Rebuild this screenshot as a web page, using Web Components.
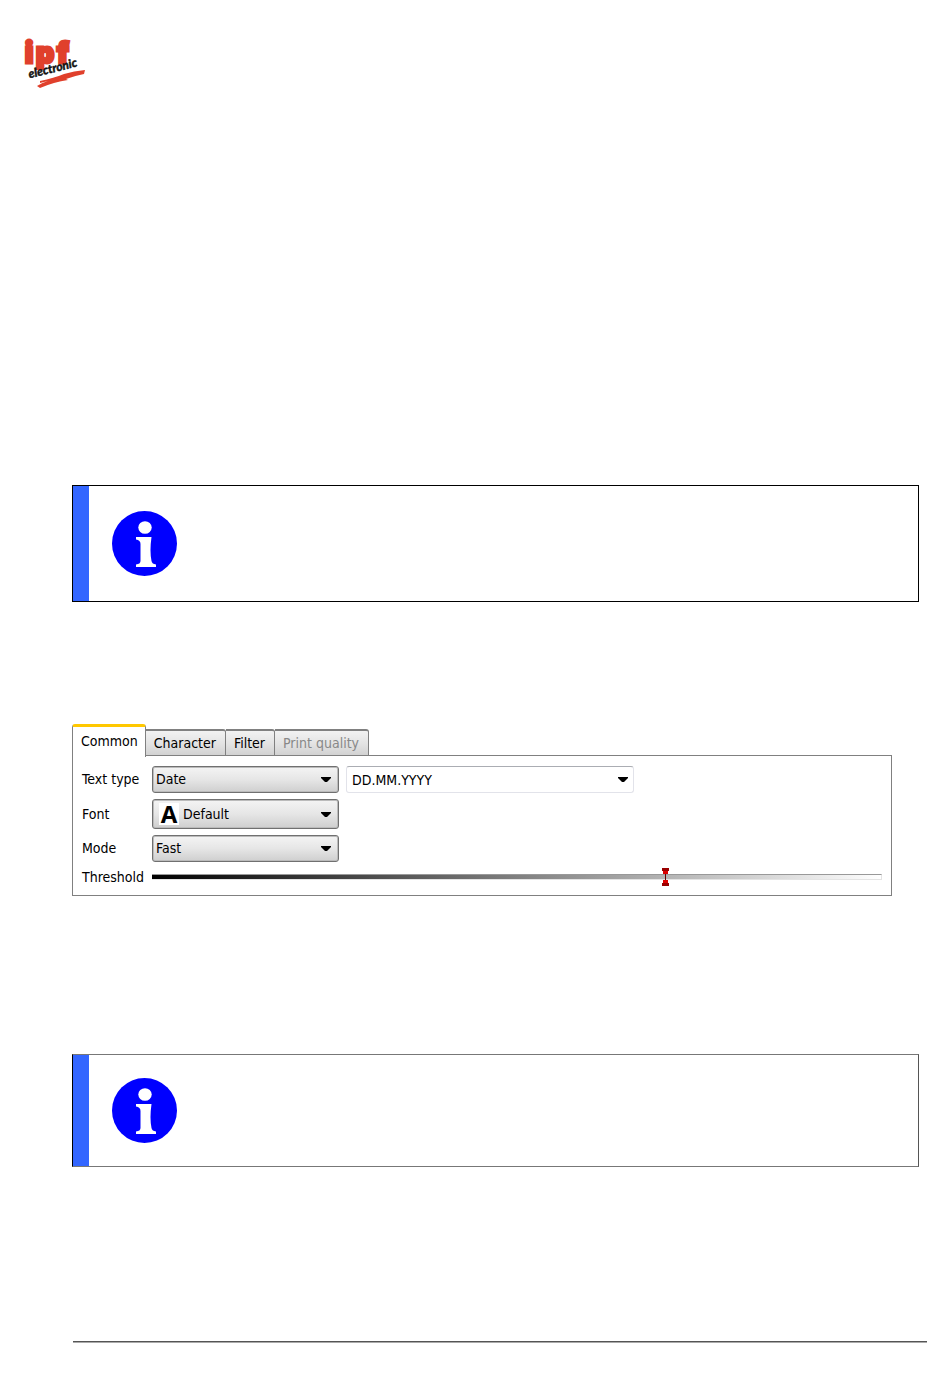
<!DOCTYPE html>
<html lang="en">
<head>
<meta charset="utf-8">
<meta name="viewport" content="width=device-width, initial-scale=1">
<title>ipf electronic</title>
<style>
  :root {
    --ui-font: "DejaVu Sans Condensed", "DejaVu Sans", sans-serif;
    --frame-gray: #808080;
    --note-blue: #3366ff;
    --tab-accent: #ffc800;
  }

  body {
    margin: 0;
    background: #fff;
    color: #000;
    font-family: var(--ui-font);
    font-size: 14px;
  }
</style>
</head>
<body>
<doc-page>
  <ipf-logo slot="header"></ipf-logo>
  <info-note></info-note>
  <tab-panel>
    <settings-form></settings-form>
  </tab-panel>
  <info-note soft></info-note>
</doc-page>

<script>
class DocPage extends HTMLElement {
  constructor() {
    super();
    const shadow = this.attachShadow({mode: 'open'});
    shadow.innerHTML = `
      <style>
        :host {
          display: block;
          padding-bottom: 44px;
        }

        header {
          padding: 38px 24px 0;
        }

        main {
          display: flex;
          flex-direction: column;
          padding: 395px 31px 174px 72px;
        }

        ::slotted(tab-panel) {
          margin: 122px 27px 158px 0;
        }

        hr {
          margin: 0 23px 0 73px;
          border: 0;
          border-top: 1px solid #555;
          border-bottom: 1px solid #aaa;
        }
      </style>
      <header><slot name="header"></slot></header>
      <main><slot></slot></main>
      <footer><hr></footer>
    `;
  }
}

class IpfLogo extends HTMLElement {
  constructor() {
    super();
    const shadow = this.attachShadow({mode: 'open'});
    shadow.innerHTML = `
      <style>
        :host {
          display: block;
          height: 52px;
        }

        svg {
          display: block;
          overflow: visible;
        }

        .name {
          font: 900 28px Inter, sans-serif;
          fill: #e0402c;
          stroke: #e0402c;
          stroke-width: 3;
        }

        .script {
          font: italic 700 12px Lato, sans-serif;
          fill: #111;
          stroke: #111;
          stroke-width: 0.5;
        }
      </style>
      <svg width="62" height="52" viewBox="0 0 62 52" role="img" aria-label="ipf electronic">
        <text class="name" y="25"><tspan x="1">i</tspan><tspan x="12">p</tspan><tspan x="33">f</tspan></text>
        <g transform="rotate(-14 7 42)">
          <text class="script" x="6" y="40">electronic</text>
        </g>
        <path d="M16 43 Q30 40 40 36 Q50 33 61 32 L60 36 Q50 38 42 41 L44 42 Q30 44 16 50 L13 48 Q17 45 24 43 L16 45 Z" fill="#e0402c"/>
      </svg>
    `;
  }
}

class InfoNote extends HTMLElement {
  constructor() {
    super();
    const shadow = this.attachShadow({mode: 'open'});
    shadow.innerHTML = `
      <style>
        :host {
          display: flex;
          border: 1px solid #000;
        }

        :host([soft]) {
          border-color: #777 #555 #777 #000;
        }

        .bar {
          width: 16px;
          background: var(--note-blue);
        }

        .icon {
          padding: 25px 23px;
        }

        :host([soft]) .icon {
          padding: 23px;
        }

        svg {
          display: block;
        }
      </style>
      <div class="bar"></div>
      <div class="icon">
        <svg width="65" height="65" viewBox="0 0 65 65" role="img" aria-label="Information">
          <circle cx="32.5" cy="32.5" r="32.5" fill="#00f"/>
          <ellipse cx="33" cy="16.5" rx="6.7" ry="6.3" fill="#fff"/>
          <path d="M24 26 H39.5 Q37.5 40 39.5 50 Q40 53 44 53.5 V56 H24 V53.5 Q28.5 53 28.5 50 V33 Q28.5 29 24 28.5 Z" fill="#fff"/>
        </svg>
      </div>
      <slot></slot>
    `;
  }
}

class TabPanel extends HTMLElement {
  constructor() {
    super();
    const shadow = this.attachShadow({mode: 'open'});
    shadow.innerHTML = `
      <style>
        :host {
          display: block;
        }

        .tabs {
          display: flex;
          align-items: flex-end;
        }

        button {
          box-sizing: border-box;
          height: 27px;
          margin: 0;
          padding: 0 9px 0 8px;
          border: 1px solid var(--frame-gray);
          border-left: 0;
          border-top-width: 2px;
          border-radius: 0 3px 0 0;
          background: linear-gradient(#f2f2f2, #e4e4e4 50%, #d2d2d2);
          color: #000;
          font: inherit;
          white-space: nowrap;
        }

        button.active {
          position: relative;
          height: 33px;
          margin-bottom: -1px;
          padding: 0 7px 2px 8px;
          border-left: 1px solid var(--frame-gray);
          border-top: 3px solid var(--tab-accent);
          border-bottom: 0;
          border-radius: 3px 3px 0 0;
          background: #fff;
        }

        button:disabled {
          color: #888;
        }

        .body {
          margin-top: -1px;
          padding: 10px 9px 9px;
          border: 1px solid var(--frame-gray);
        }
      </style>
      <div class="tabs" role="tablist">
        <button class="active" role="tab" aria-selected="true">Common</button>
        <button role="tab">Character</button>
        <button role="tab">Filter</button>
        <button role="tab" disabled>Print quality</button>
      </div>
      <div class="body" role="tabpanel"><slot></slot></div>
    `;
  }

  connectedCallback() {
    const tabs = this.shadowRoot.querySelectorAll('button');
    tabs.forEach(tab => {
      tab.addEventListener('click', () => {
        tabs.forEach(other => {
          other.classList.toggle('active', other === tab);
          other.setAttribute('aria-selected', other === tab);
        });
      });
    });
  }
}

// Frame and arrow shared by every drop-down; the control itself is slotted in
class DropBox extends HTMLElement {
  constructor() {
    super();
    const shadow = this.attachShadow({mode: 'open'});
    shadow.innerHTML = `
      <style>
        :host {
          box-sizing: border-box;
          display: grid;
          grid-template-columns: auto 1fr 24px;
          align-items: center;
          height: 27px;
          border: 1px solid #707070;
          border-radius: 3px;
          background: linear-gradient(#f4f4f4, #e6e6e6 50%, #cfcfcf);
          box-shadow: inset 0 0 0 1px #bbb;
        }

        :host([tall]) {
          height: 30px;
        }

        :host([editable]) {
          grid-template-columns: auto 1fr 20px;
          border-color: #abadb3 #e2e3ea #e2e3ea;
          background: #fff;
          box-shadow: none;
        }

        ::slotted(select),
        ::slotted(input) {
          grid-area: 1 / 2 / 2 / 4;
          align-self: stretch;
        }

        svg {
          grid-area: 1 / 3;
          justify-self: center;
          pointer-events: none;
          z-index: 1;
        }
      </style>
      <slot name="icon"></slot>
      <slot></slot>
      <svg width="10" height="5" viewBox="0 0 10 5" aria-hidden="true">
        <path d="M0 0 H10 V1 L6 5 H4 L0 1 Z"/>
      </svg>
    `;
  }
}

class SettingsForm extends HTMLElement {
  constructor() {
    super();
    const shadow = this.attachShadow({mode: 'open'});
    shadow.innerHTML = `
      <style>
        :host {
          display: block;
        }

        form {
          display: grid;
          grid-template-columns: 70px 187px 295px 1fr;
          align-items: center;
          row-gap: 6px;
        }

        label {
          grid-column: 1;
          padding-bottom: 1px;
          white-space: nowrap;
        }

        select,
        input {
          box-sizing: border-box;
          min-width: 0;
          margin: 0;
          border: 0;
          appearance: none;
          background: none;
          color: inherit;
          font: inherit;
        }

        select {
          padding: 0 24px 1px 3px;
        }

        input[type="text"] {
          padding: 0 24px 0 5px;
        }

        .pattern {
          grid-column: 3;
          margin-left: 7px;
        }

        .letter {
          width: 20px;
          margin: 0 1px 0 6px;
          background: #fff;
          font: 700 24px/22px "Open Sans", sans-serif;
          text-align: center;
        }

        input[type="range"] {
          grid-column: 2 / -1;
          height: 18px;
        }

        input[type="range"]::-webkit-slider-runnable-track {
          height: 6px;
          box-sizing: border-box;
          border-top: 1px solid #999;
          border-bottom: 1px solid #e4e4e4;
          border-right: 1px solid #e4e4e4;
          background: linear-gradient(90deg, #000, #fff);
        }

        input[type="range"]::-webkit-slider-thumb {
          appearance: none;
          width: 7px;
          height: 18px;
          margin-top: -7px;
          background:
            linear-gradient(#900, #900) 0 0 / 7px 3px no-repeat,
            linear-gradient(#900, #900) 0 100% / 7px 3px no-repeat,
            linear-gradient(#d00, #d00) 50% 3px / 5px 3px no-repeat,
            linear-gradient(#d00, #d00) 50% 12px / 5px 3px no-repeat,
            linear-gradient(#600, #600) 50% 0 / 1px 100% no-repeat;
        }
      </style>
      <form>
        <label for="type">Text type</label>
        <drop-box>
          <select id="type"><option>Date</option></select>
        </drop-box>
        <drop-box class="pattern" editable>
          <input type="text" value="DD.MM.YYYY" aria-label="Date format">
        </drop-box>

        <label for="font">Font</label>
        <drop-box tall>
          <span class="letter" slot="icon" aria-hidden="true">A</span>
          <select id="font"><option>Default</option></select>
        </drop-box>

        <label for="mode">Mode</label>
        <drop-box>
          <select id="mode"><option>Fast</option></select>
        </drop-box>

        <label for="threshold">Threshold</label>
        <input id="threshold" type="range" min="0" max="255" value="180">
      </form>
    `;
  }
}

customElements.define('doc-page', DocPage);
customElements.define('ipf-logo', IpfLogo);
customElements.define('info-note', InfoNote);
customElements.define('tab-panel', TabPanel);
customElements.define('drop-box', DropBox);
customElements.define('settings-form', SettingsForm);
</script>
</body>
</html>
